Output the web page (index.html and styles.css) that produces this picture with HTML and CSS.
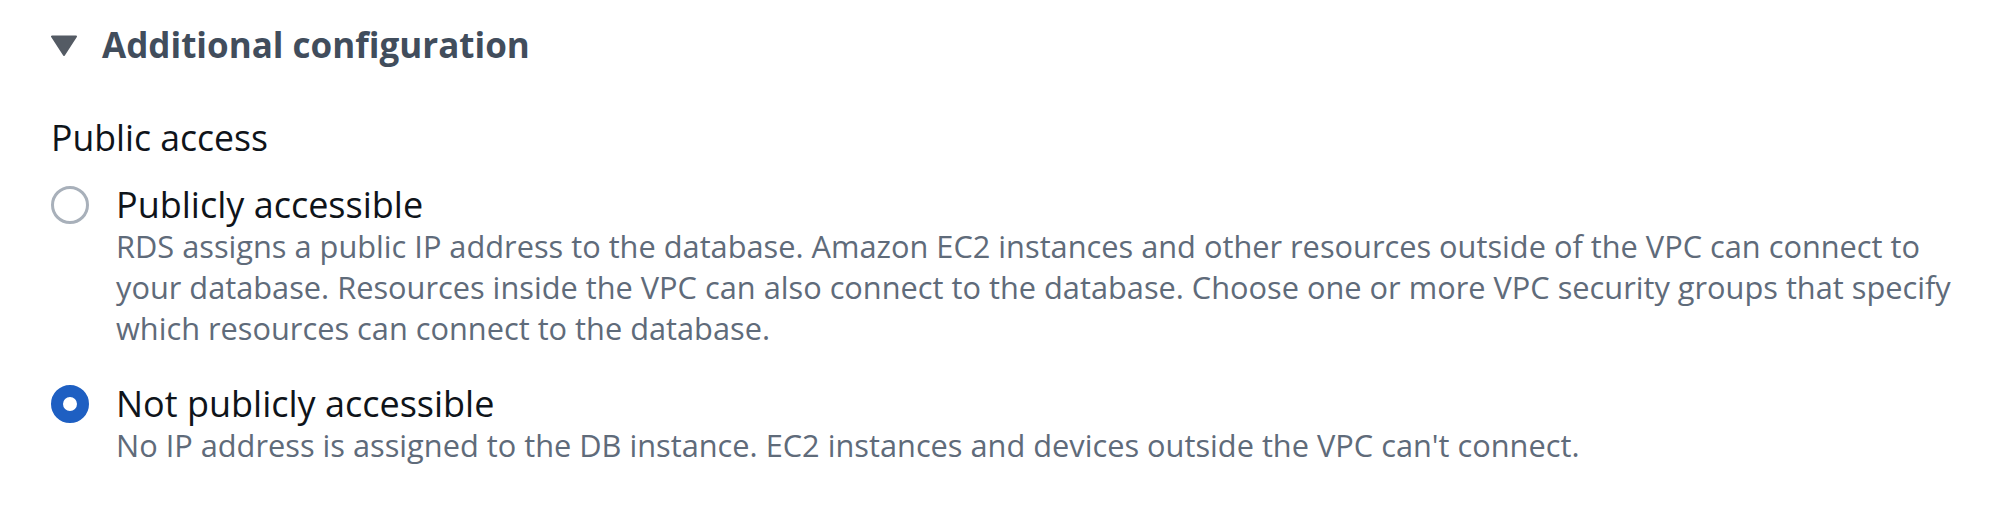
FILE: index.html
```html
<!DOCTYPE html>
<html lang="en">
<head>
<meta charset="utf-8">
<title>Additional configuration</title>
<link rel="stylesheet" href="styles.css">
</head>
<body>
<div class="panel">
  <div class="section-header">
    <svg class="caret" viewBox="0 0 26 21" width="26" height="21" aria-hidden="true">
      <path d="M1 1.5 L25 1.5 L13 20 Z" fill="#545b64" stroke="#545b64" stroke-width="2" stroke-linejoin="round"/>
    </svg>
    <h2 class="section-title">Additional configuration</h2>
  </div>
  <div class="field">
    <div class="field-label">Public access</div>
    <div class="radio-group">
      <div class="radio-option">
        <span class="radio"></span>
        <div class="radio-text">
          <div class="radio-label">Publicly accessible</div>
          <div class="radio-desc">RDS assigns a public IP address to the database. Amazon EC2 instances and other resources outside of the VPC can connect to your database. Resources inside the VPC can also connect to the database. Choose one or more VPC security groups that specify which resources can connect to the database.</div>
        </div>
      </div>
      <div class="radio-option">
        <span class="radio checked"></span>
        <div class="radio-text">
          <div class="radio-label">Not publicly accessible</div>
          <div class="radio-desc">No IP address is assigned to the DB instance. EC2 instances and devices outside the VPC can't connect.</div>
        </div>
      </div>
    </div>
  </div>
</div>
</body>
</html>
```
FILE: styles.css
```css
html, body {
  margin: 0;
  padding: 0;
  background: #ffffff;
}
body {
  font-family: "Open Sans", "Noto Sans", sans-serif;
  color: #16191f;
}
.panel {
  padding: 24px 25px 0 51px;
  width: 2000px;
  box-sizing: border-box;
}
.section-header {
  display: flex;
  align-items: center;
  gap: 25px;
  height: 42px;
}
.caret {
  display: block;
  flex: none;
}
.section-title {
  margin: 0;
  font-size: 35px;
  line-height: 42px;
  font-weight: 700;
  color: #414d5c;
}
.field {
  margin-top: 50px;
}
.field-label {
  font-size: 35.6px;
  line-height: 42px;
  color: #0f141a;
}
.radio-group {
  margin-top: 26px;
  display: flex;
  flex-direction: column;
  gap: 34px;
}
.radio-option {
  display: flex;
  align-items: flex-start;
  gap: 27px;
}
.radio {
  flex: none;
  width: 38px;
  height: 38px;
  margin-top: 2px;
  box-sizing: border-box;
  border-radius: 50%;
  border: 3px solid #a8b0ba;
  background: #ffffff;
}
.radio.checked {
  border: 12px solid #1e5fc2;
}
.radio-text {
  flex: 1;
}
.radio-label {
  font-size: 36px;
  line-height: 42px;
  color: #0f141a;
}
.radio-desc {
  font-size: 30.75px;
  line-height: 41px;
  color: #5f6b7a;
}
```
